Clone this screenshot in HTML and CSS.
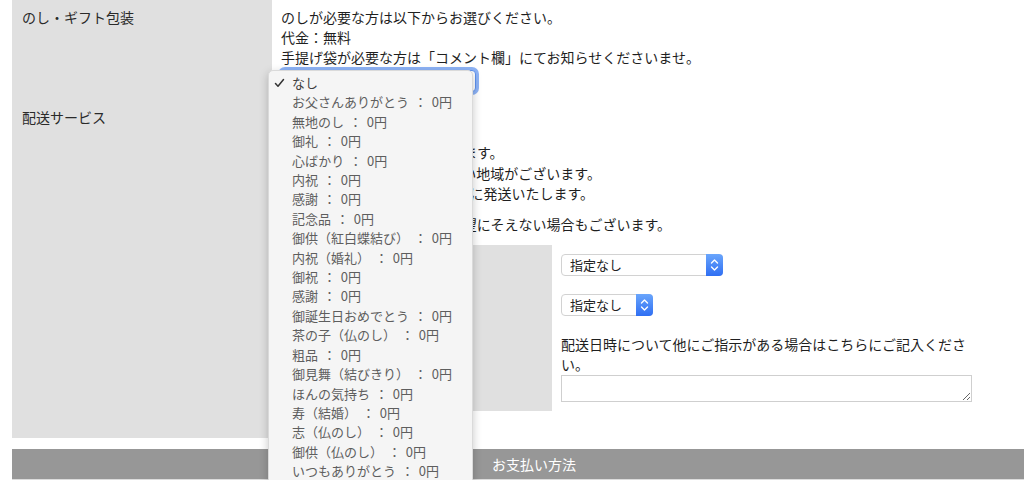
FILE: index.html
```html
<!DOCTYPE html>
<html>
<head>
<meta charset="utf-8">
<meta name="viewport" content="width=device-width, initial-scale=1">
<link rel="stylesheet" href="styles.css">
</head>
<body>

<div class="page">
  <div class="form-table">
    <div class="th">のし・ギフト包装</div>
    <div class="td">
      <p class="lines">のしが必要な方は以下からお選びください。<br>代金：無料<br>手提げ袋が必要な方は「コメント欄」にてお知らせくださいませ。</p>
      <select class="noshi-select">
        <option>なし</option>
      </select>
    </div>

    <div class="th">配送サービス</div>
    <div class="td">
      <select class="service-select">
        <option>宅配便</option>
      </select>
      <p class="lines note">お届け日時はご指定いただけます。<br>離島など、一部ご指定できない地域がございます。<br>ご入金確認後、3-4営業日以内に発送いたします。</p>
      <p class="lines note2">天候・交通事情等によりご希望にそえない場合もございます。</p>

      <div class="date-table">
        <div class="date-th">配送日時指定</div>
        <div class="date-td">
          <span class="mac-select date-select">
            <select><option>指定なし</option></select>
            <span class="stepper"><svg width="17" height="22" viewBox="0 0 17 22"><path d="M5.5 9 L8.5 6 L11.5 9 M5.5 13 L8.5 16 L11.5 13" fill="none" stroke="#fff" stroke-width="1.4" stroke-linecap="round" stroke-linejoin="round"/></svg></span>
          </span>
          <span class="mac-select time-select">
            <select><option>指定なし</option></select>
            <span class="stepper"><svg width="17" height="22" viewBox="0 0 17 22"><path d="M5.5 9 L8.5 6 L11.5 9 M5.5 13 L8.5 16 L11.5 13" fill="none" stroke="#fff" stroke-width="1.4" stroke-linecap="round" stroke-linejoin="round"/></svg></span>
          </span>
          <p class="lines date-note">配送日時について他にご指示がある場合はこちらにご記入ください。</p>
          <textarea class="date-comment"></textarea>
        </div>
      </div>
    </div>
  </div>

  <div class="section-bar">お支払い方法</div>

  <!-- open native menu of the noshi select -->
  <ul class="dropdown">
    <li class="selected"><svg class="check" width="11" height="10" viewBox="0 0 11 10"><path d="M1.5 5.5 L4 8.2 L9.5 1.5" fill="none" stroke="#333" stroke-width="1.5" stroke-linecap="round" stroke-linejoin="round"/></svg>なし</li>
    <li>お父さんありがとう ： 0円</li>
    <li>無地のし ： 0円</li>
    <li>御礼 ： 0円</li>
    <li>心ばかり ： 0円</li>
    <li>内祝 ： 0円</li>
    <li>感謝 ： 0円</li>
    <li>記念品 ： 0円</li>
    <li>御供（紅白蝶結び） ： 0円</li>
    <li>内祝（婚礼） ： 0円</li>
    <li>御祝 ： 0円</li>
    <li>感謝 ： 0円</li>
    <li>御誕生日おめでとう ： 0円</li>
    <li>茶の子（仏のし） ： 0円</li>
    <li>粗品 ： 0円</li>
    <li>御見舞（結びきり） ： 0円</li>
    <li>ほんの気持ち ： 0円</li>
    <li>寿（結婚） ： 0円</li>
    <li>志（仏のし） ： 0円</li>
    <li>御供（仏のし） ： 0円</li>
    <li>いつもありがとう ： 0円</li>
  </ul>
</div>

</body>
</html>
```

FILE: styles.css
```css
* {
  box-sizing: border-box;
}

html, body {
  margin: 0;
  overflow: hidden;
  background: #fff;
}

body {
  font-family: "Noto Sans CJK JP", "Noto Sans", sans-serif;
  font-size: 14px;
  color: #1f1f1f;
}

.page {
  position: relative;
  width: 1044px;
  margin-left: 12px;
}

.form-table {
  display: grid;
  grid-template-columns: 260px 1fr;
}

.th {
  background-color: #e0e0e0;
  padding: 7px 10px;
  line-height: 20px;
  color: #2a2a2a;
}

.td {
  padding: 7px 9px 8px 9px;
}

.td:last-child {
  padding-bottom: 27px;
}

.lines {
  margin: 0;
  line-height: 20px;
}

.noshi-select {
  display: block;
  width: 195px;
  height: 22px;
  margin-top: 3px;
  border: 1px solid #5d92ef;
  border-radius: 4px;
  box-shadow: 0 0 0 3px #8db3f6;
  background: #fff;
  font: inherit;
  font-size: 13px;
  -webkit-appearance: none;
  appearance: none;
}

.service-select {
  display: block;
  width: 150px;
  height: 24px;
  margin-bottom: 11px;
  border: 1px solid #ccc;
  border-radius: 4px;
  background: #fff;
  font: inherit;
  font-size: 13px;
  -webkit-appearance: none;
  appearance: none;
}

.note {
  line-height: 20.5px;
}

.note2 {
  margin-top: 10px;
}

.date-table {
  display: grid;
  grid-template-columns: 271px 429px;
  margin-top: 11px;
}

.date-th {
  background-color: #e0e0e0;
  padding: 9px 10px;
  color: #2a2a2a;
}

.date-td {
  padding: 9px 9px 9px 9px;
}

.mac-select {
  position: relative;
  display: block;
  height: 22px;
  margin-bottom: 18px;
}

.mac-select select {
  width: 100%;
  height: 22px;
  padding: 0 20px 0 8px;
  border: 1px solid #d2d2d2;
  border-radius: 4px;
  background: #fff;
  font: inherit;
  font-size: 13px;
  color: #222;
  -webkit-appearance: none;
  appearance: none;
}

.date-select {
  width: 162px;
}

.time-select {
  width: 92px;
}

.stepper {
  position: absolute;
  top: 0;
  right: 0;
  width: 17px;
  height: 22px;
  border-radius: 0 4px 4px 0;
  background: linear-gradient(#6aa6fc, #2f6ff3);
}

.stepper svg {
  display: block;
}

.date-note {
  margin-bottom: 1px;
}

.date-comment {
  display: block;
  width: 411px;
  height: 27px;
  border: 1px solid #cfcfcf;
  resize: both;
}

.section-bar {
  margin-top: 11px;
  height: 31px;
  line-height: 30px;
  background-color: #979797;
  border-bottom: 1px solid #dcdcdc;
  color: #fff;
  text-align: center;
}

.dropdown {
  position: absolute;
  top: 70px;
  left: 256px;
  width: 205px;
  height: 416px;
  margin: 0;
  padding: 2px 0 6px 23px;
  list-style: none;
  background: #f5f5f5;
  border: 1px solid #dadada;
  border-radius: 5px;
  box-shadow: 0 3px 10px rgba(0, 0, 0, 0.22);
  font-size: 13px;
  color: #5e5e5e;
}

.dropdown li {
  position: relative;
  line-height: 19.4px;
  white-space: nowrap;
  word-spacing: 2px;
}

.dropdown .selected {
  color: #404040;
}

.check {
  position: absolute;
  left: -18px;
  top: 5px;
}
```
